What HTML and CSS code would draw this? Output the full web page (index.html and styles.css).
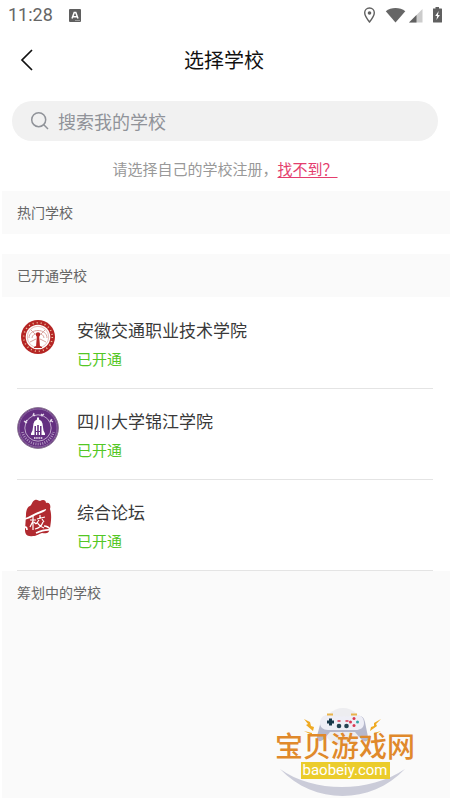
FILE: index.html
```html
<!DOCTYPE html>
<html lang="zh-CN">
<head>
<meta charset="utf-8">
<meta name="viewport" content="width=device-width, initial-scale=1">
<title>选择学校</title>
<link rel="stylesheet" href="styles.css">
</head>
<body>
<div class="app">
  <div class="status-bar">
    <span class="time">11:28</span>
    <svg class="notice" width="12" height="13" viewBox="0 0 12 13" aria-hidden="true"><rect width="12" height="13" rx="1" fill="#5f5f5f"/><path d="M3 9.500 5.200 3.500h1.600L9 9.500M4 7.700h4" fill="none" stroke="#fff" stroke-width="1.500"/><path d="M6 11.500h5" stroke="#aaa" stroke-width=".8"/></svg>
    <svg class="indicators" width="80" height="18" viewBox="0 0 80 18" aria-hidden="true">
      <path d="M6.500 2C3.600 2 1.700 4.100 1.700 6.800c0 3.300 4.800 9.200 4.800 9.200s4.800-5.900 4.800-9.200C11.300 4.100 9.400 2 6.500 2z" fill="none" stroke="#606060" stroke-width="1.400"/>
      <circle cx="6.500" cy="7" r="1.800" fill="#606060"/>
      <path d="M22.800 5.300C28 .9 37 .9 42.300 5.300L32.500 16.500z" fill="#666"/>
      <path d="M59.500 3v13.500H46z" fill="#ccc"/><path d="M53.500 9v7.500H46z" fill="#606060"/>
      <path d="M70 2.500h2.500V1h3.500v1.500h2.500q.5 0 .5.500v13q0 .6-.6.600h-7.800q-.6 0-.6-.6z" fill="#606060"/>
      <path d="m75.700 5-3.500 5h2l-.8 4 3.500-5h-2z" fill="#fff"/>
    </svg>
  </div>
  <header class="nav">
    <button class="back" type="button" aria-label="返回"><svg width="14" height="22" viewBox="0 0 14 22"><path d="M12 1 2 11l10 10" fill="none" stroke="#111" stroke-width="1.700"/></svg></button>
    <h1>选择学校</h1>
  </header>
  <label class="search">
    <svg width="20" height="20" viewBox="0 0 20 20" aria-hidden="true"><circle cx="8.700" cy="8.700" r="7" fill="none" stroke="#909399" stroke-width="1.500"/><path d="m13.800 13.800 4.200 4.200" stroke="#909399" stroke-width="1.500"/></svg>
    <input type="text" placeholder="搜索我的学校" aria-label="搜索我的学校">
  </label>
  <p class="hint">请选择自己的学校注册，<a href="#">找不到？</a></p>
  <main>
    <h2 class="section">热门学校</h2>
    <div class="gap"></div>
    <h2 class="section">已开通学校</h2>
    <ul class="schools">
      <li>
        <svg class="logo" viewBox="0 0 42 42" aria-hidden="true">
          <circle cx="21" cy="21" r="17" fill="#b52524"/>
          <circle cx="21" cy="21" r="14.300" fill="none" stroke="#efc2a0" stroke-width="1.600" stroke-dasharray="1 3.100"/>
          <circle cx="21" cy="21" r="12.300" fill="#fff"/>
          <circle cx="21" cy="21" r="10.700" fill="none" stroke="#d8a09c" stroke-width=".7"/>
          <path d="M12 22c0-10 18-10 18 0M15 22c0-6 12-6 12 0M13 26l6-3m10 3-6-3M14 14l4 4m10-4-4 4" fill="none" stroke="#d9a5a0" stroke-width="1"/>
          <circle cx="21" cy="18.500" r="2.200" fill="#b52524"/><path d="M20 18h2l1 13h-4zM17 31q4-3 8 0v1h-8z" fill="#b52524"/>
        </svg>
        <div><h3>安徽交通职业技术学院</h3><p>已开通</p></div>
      </li>
      <li>
        <svg class="logo" viewBox="0 0 42 42" aria-hidden="true">
          <circle cx="21" cy="21" r="20.400" fill="#642f80" stroke="#8a7692"/>
          <circle cx="21" cy="21" r="19" fill="none" stroke="#a58bb3" stroke-width=".6"/>
          <circle cx="21" cy="21" r="13.200" fill="none" stroke="#d5c5de" stroke-width=".8"/>
          <path d="M5.500 25a16 16 0 0 0 31 0" fill="none" stroke="#ad94bd" stroke-width="2.700" stroke-dasharray="1 1.300"/>
          <path d="m7 14 3 2m-2 0 2-3m6-6 2 2m-2 0 1-3m7 1 2 2m-2 0 3-2m6 6 3 2m-3 0 2-3" stroke="#e6dbea" stroke-width="1.200"/>
          <path d="M20 10.500h2v2q3 1 3.500 4l1 7 1.500 3v1.500h-3.500V19H23v5h-1.200v-6h-1.600v6H19v-5h-1.500v9H14v-1.500l1.500-3 1-7q.5-3 3.500-4zM19 25h1.200v3H19zm2.800 0H23v3h-1.200z" fill="#fff"/>
          <path d="M17 31h9" stroke="#d4c1db" stroke-width="2" stroke-dasharray="1.500 .7"/>
        </svg>
        <div><h3>四川大学锦江学院</h3><p>已开通</p></div>
      </li>
      <li>
        <svg class="logo" viewBox="0 0 42 42" aria-hidden="true">
          <path d="M9 17c0-4 1-8 4-9 2-1 2-5 5-6 2-1 4 1 5 1 3-2 6-1 6 2 4-1 5 3 4 6 2 6 1 13 0 19-1 5-3 6-8 5-4 1-5 3-9 3-6 1-8-2-8-6z" fill="#b12a30"/>
          <path d="M6 21c6-2 15-8 23-10 1 2-5 4-10 6-4 2-7 4-12 5z" fill="#fff"/>
          <path d="M6 29q4-1 4 3M27 28q4 0 7 4-6-1-15 3" fill="none" stroke="#fff" stroke-width="1.700"/>
          <path d="M13 22h6m-3-4v14m0-9-3 6m4-5 2 2m4-9v3m-3 1 8-2m-6 3-3 4m6-5 2 3m-1 0q-2 6-8 7m2-7q2 4 7 6" fill="none" stroke="#fff" stroke-width="1.200"/>
        </svg>
        <div><h3>综合论坛</h3><p>已开通</p></div>
      </li>
    </ul>
    <h2 class="section">筹划中的学校</h2>
  </main>
  <aside class="watermark">
    <svg viewBox="0 0 140 90" aria-hidden="true">
      <circle cx="68" cy="21" r="19" fill="#ededf0"/>
      <path d="M5 63c34 24 89 24 125 0-34 36-91 36-125 0z" fill="#cbccd9"/>
      <path d="M52 10c9 2 20 2 29 0 4-1 7 1 8 6l3 15c1 5-4 6-7 2l-6-7H54l-6 7c-4 4-8 2-7-3l4-15c1-4 4-6 7-5z" transform="translate(1)" fill="#b6b8cc"/>
      <path d="M52 9c10 2 20 2 30 0 5 0 7 4 7 8 0 5-4 7-8 7H53c-5 0-8-3-8-7s3-8 7-8z" fill="#eeeef6"/>
      <path d="M52 8.500h6m18 0h6" stroke="#e9b34a" stroke-width="2"/>
      <path d="M52 16h7m-3.500-3.500v7" stroke="#173749" stroke-width="3"/>
      <circle cx="64" cy="20" r="2.300" fill="#234353"/><circle cx="71.500" cy="20" r="2.300" fill="#234353"/>
      <path d="M62.500 15h3m5 0h3" stroke="#d83853" stroke-width="1.500"/>
      <circle cx="79" cy="12.500" r="1.500" fill="#d83853"/><circle cx="75.500" cy="16" r="1.500" fill="#d83853"/><circle cx="82.500" cy="16" r="1.500" fill="#35a3a7"/><circle cx="79" cy="19.500" r="1.500" fill="#d83853"/>
      <path d="m29 13 6 3 1 4 3 1-1 4-7-6 2-1zM29 25l8 2v2zM106 13l-7 4v3l-3 1-1 4 7-5-1-2zM106 25l-7 2v2z" fill="#efaa22"/>
    </svg>
    <strong>宝贝游戏网</strong>
    <span>baobeiy.com</span>
  </aside>
</div>
</body>
</html>
```
FILE: styles.css
```css
* { box-sizing: border-box; }
body, h1, h2, h3, p, ul { margin: 0; padding: 0; }
body {
  background: #fff;
  color: #333;
  font-family: "Noto Sans CJK SC", "Noto Sans", sans-serif;
}
.app {
  position: relative;
  display: flex;
  flex-direction: column;
  min-height: 100vh;
  padding: 0 0 2px 2px;
}
.status-bar {
  display: flex;
  align-items: center;
  height: 30px;
  padding: 0 7px 0 6px;
}
.time {
  color: #666;
  font: 400 18px/32px Roboto, sans-serif;
}
.notice { margin-left: 16px; }
.indicators { margin-left: auto; }
.nav {
  display: grid;
  grid-template-columns: 50px 1fr 54px;
  align-items: center;
  height: 60px;
}
.back {
  display: flex;
  justify-content: center;
  padding: 0;
  border: 0;
  background: none;
}
.nav h1 {
  text-align: center;
  color: #111;
  font-size: 20px;
  font-weight: 400;
  line-height: 30px;
}
.search {
  display: flex;
  align-items: center;
  gap: 8px;
  height: 40px;
  margin: 11px 12px 0 10px;
  padding: 0 18px;
  border-radius: 20px;
  background: #f1f1f1;
}
.search input {
  flex: 1;
  min-width: 0;
  padding: 0;
  border: 0;
  outline: 0;
  background: none;
  font: inherit;
  font-size: 18px;
}
.search input::placeholder { color: #909399; opacity: 1; }
.hint {
  padding: 16px 2px 10px 0;
  text-align: center;
  color: #999;
  font-size: 15px;
  line-height: 24px;
}
.hint a {
  color: #e43d6d;
  text-underline-offset: 2px;
}
main {
  display: flex;
  flex: 1;
  flex-direction: column;
}
.section {
  height: 43px;
  padding: 0 15px;
  background: #fafafa;
  color: #666;
  font-size: 14px;
  font-weight: 400;
  line-height: 43px;
}
.section:last-child { flex: 1; }
.gap { height: 20px; }
.schools {
  list-style: none;
  padding: 1px 17px 0 15px;
}
.schools li {
  display: flex;
  gap: 18px;
  height: 91px;
  padding-top: 18px;
  border-bottom: 1px solid #e4e4e4;
}
.logo {
  width: 42px;
  height: 42px;
}
.schools h3 {
  color: #3a3a3a;
  font-size: 17px;
  font-weight: 400;
  line-height: 28px;
}
.schools p {
  color: #53c724;
  font-size: 15px;
  line-height: 30px;
}
.watermark {
  position: absolute;
  right: 35px;
  bottom: 4px;
  display: flex;
  flex-direction: column;
  align-items: center;
  width: 140px;
  height: 90px;
  padding-top: 22px;
}
.watermark svg {
  position: absolute;
  inset: 0;
}
.watermark strong {
  position: relative;
  color: #e0892b;
  font-size: 28px;
  font-weight: 500;
  line-height: 34px;
  white-space: nowrap;
}
.watermark span {
  position: relative;
  padding: 0 2px;
  background: #ebcc2b;
  color: #fff;
  font: 400 15px/17px Roboto, sans-serif;
}
```
